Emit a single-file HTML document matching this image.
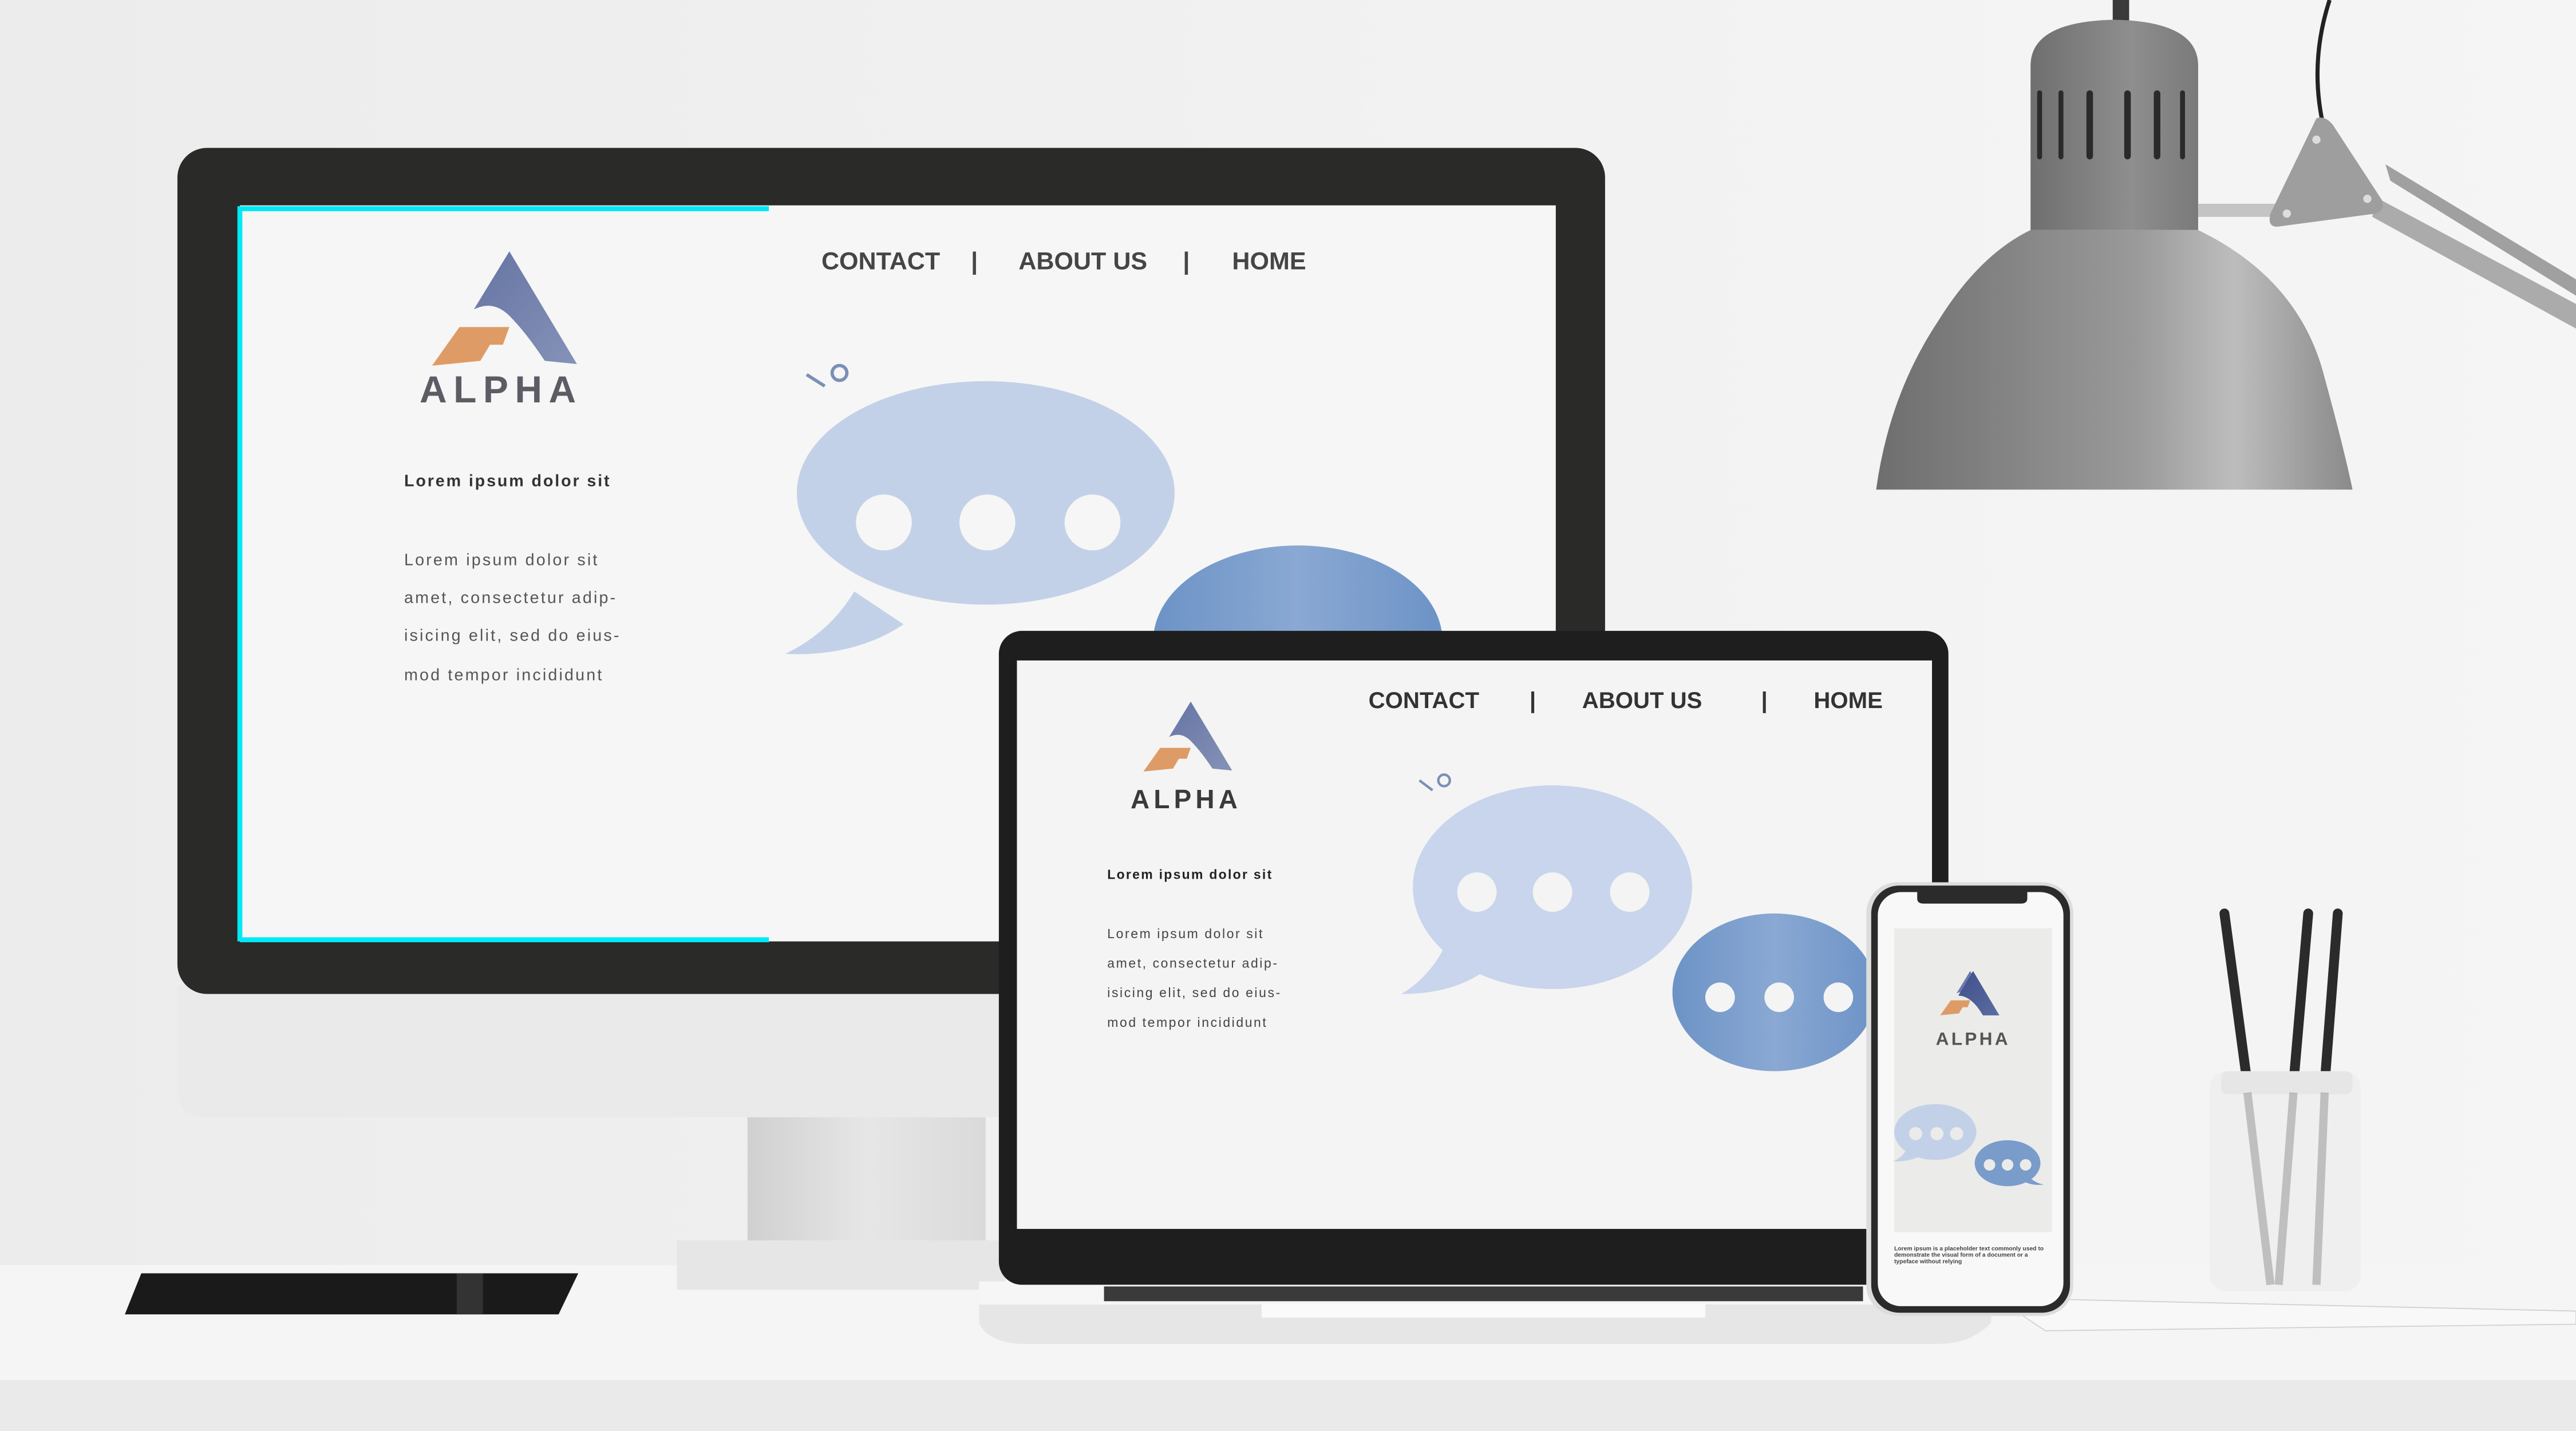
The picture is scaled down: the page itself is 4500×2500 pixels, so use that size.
<!DOCTYPE html>
<html><head><meta charset="utf-8"><style>
html,body{margin:0;padding:0;width:4500px;height:2500px;overflow:hidden;background:#efefef}
svg{display:block}
text{font-family:"Liberation Sans",sans-serif}
</style></head><body>
<svg width="4500" height="2500" viewBox="0 0 1568 871" preserveAspectRatio="none" xmlns="http://www.w3.org/2000/svg">
<defs>
<linearGradient id="bg" x1="0" y1="0" x2="1" y2="0"><stop offset="0" stop-color="#ececec"/><stop offset="0.6" stop-color="#f2f2f2"/><stop offset="1" stop-color="#f5f5f5"/></linearGradient>
<linearGradient id="shade" x1="0" y1="0" x2="1" y2="0"><stop offset="0" stop-color="#6e6e6e"/><stop offset="0.55" stop-color="#9a9a9a"/><stop offset="0.75" stop-color="#bdbdbd"/><stop offset="1" stop-color="#8a8a8a"/></linearGradient>
<linearGradient id="head" x1="0" y1="0" x2="1" y2="0"><stop offset="0" stop-color="#6f6f6f"/><stop offset="0.6" stop-color="#8e8e8e"/><stop offset="1" stop-color="#7a7a7a"/></linearGradient>
<linearGradient id="tri" x1="0" y1="0" x2="1" y2="1"><stop offset="0" stop-color="#6674a3"/><stop offset="1" stop-color="#8592b8"/></linearGradient>
<linearGradient id="tri2" x1="0" y1="0" x2="1" y2="1"><stop offset="0" stop-color="#3e4f8c"/><stop offset="1" stop-color="#5b6ca0"/></linearGradient>
<linearGradient id="b2" x1="0" y1="0" x2="1" y2="0"><stop offset="0" stop-color="#6c93c6"/><stop offset="0.5" stop-color="#8aa8d3"/><stop offset="1" stop-color="#6c93c6"/></linearGradient>
<linearGradient id="neck" x1="0" y1="0" x2="1" y2="0"><stop offset="0" stop-color="#d0d0d0"/><stop offset="0.5" stop-color="#e6e6e6"/><stop offset="1" stop-color="#dadada"/></linearGradient>
<clipPath id="imacScr"><rect x="146" y="125" width="801" height="448"/></clipPath>
<clipPath id="lapScr"><rect x="619" y="402" width="557" height="346"/></clipPath>
<g id="logo">
<path d="M48 0 L90 70 L70 68 Q58 50 48 40 Q38 30 26 36 Z" fill="url(#tri)"/>
<path d="M17 47 L48 47 L44 58 L36 58 L30 68 L0 71 Z" fill="#de9b66"/>
</g>
</defs>
<rect width="1568" height="871" fill="url(#bg)"/>
<rect y="770" width="1568" height="70" fill="#f5f5f5"/>
<rect y="840" width="1568" height="31" fill="#eaeaea"/>

<!-- lamp -->
<rect x="1286" y="0" width="10" height="18" fill="#3a3a3a"/>
<path d="M1418 0 Q1405 40 1415 80" stroke="#222" stroke-width="2.5" fill="none"/>
<path d="M1236 40 Q1236 13 1287 12 Q1338 13 1338 40 L1338 140 L1236 140 Z" fill="url(#head)"/>
<g fill="#2a2a2a"><rect x="1240" y="55" width="3" height="42" rx="1.5"/><rect x="1253" y="55" width="3" height="42" rx="1.5"/><rect x="1270" y="55" width="4" height="42" rx="2"/><rect x="1293" y="55" width="4" height="42" rx="2"/><rect x="1311" y="55" width="4" height="42" rx="2"/><rect x="1327" y="55" width="3" height="42" rx="1.5"/></g>
<path d="M1236 140 L1338 140 Q1400 170 1415 230 Q1426 270 1432 298 L1142 298 Q1150 240 1180 195 Q1205 155 1236 140 Z" fill="url(#shade)"/>
<rect x="1338" y="124" width="48" height="8" fill="#c4c4c4"/>
<path d="M1446 120 L1568 185 L1568 200 L1444 132 Z" fill="#ababab"/>
<path d="M1452 100 L1568 170 L1568 180 L1455 110 Z" fill="#a0a0a0"/>
<path d="M1410 72 Q1415 70 1420 76 L1450 122 Q1452 128 1446 130 L1386 138 Q1380 138 1382 130 Z" fill="#9e9e9e"/>
<circle cx="1410" cy="85" r="2.5" fill="#ddd"/><circle cx="1392" cy="130" r="2.5" fill="#ddd"/><circle cx="1441" cy="121" r="2.5" fill="#ddd"/>

<!-- iMac -->
<rect x="455" y="680" width="145" height="80" fill="url(#neck)"/>
<rect x="412" y="755" width="200" height="30" fill="#e6e6e6"/>
<path d="M108 600 L977 600 L977 662 Q977 680 959 680 L126 680 Q108 680 108 662 Z" fill="#eaeaea"/>
<rect x="108" y="90" width="869" height="515" rx="18" fill="#2a2a28"/>
<rect x="146" y="125" width="801" height="448" fill="#f6f6f6"/>
<g clip-path="url(#imacScr)">
<use href="#logo" transform="translate(263,153) scale(0.98)"/>
<text x="305" y="245" text-anchor="middle" font-size="23" font-weight="bold" fill="#5c5c64" letter-spacing="4">ALPHA</text>
<text x="246" y="296" font-size="10" font-weight="bold" fill="#333" letter-spacing="1">Lorem ipsum dolor sit</text>
<g font-size="10" fill="#555" letter-spacing="1.1"><text x="246" y="344">Lorem ipsum dolor sit</text><text x="246" y="367">amet, consectetur adip-</text><text x="246" y="390">isicing elit, sed do eius-</text><text x="246" y="414">mod tempor incididunt</text></g>
<g font-size="15" font-weight="bold" fill="#454545"><text x="500" y="164">CONTACT</text><text x="591" y="164">|</text><text x="620" y="164">ABOUT US</text><text x="720" y="164">|</text><text x="750" y="164">HOME</text></g>
<line x1="491" y1="228" x2="502" y2="235" stroke="#7a8fb5" stroke-width="2"/><circle cx="511" cy="227" r="4.5" fill="none" stroke="#7a8fb5" stroke-width="2"/>
<ellipse cx="790" cy="390" rx="88" ry="58" fill="url(#b2)"/>
<path d="M520 360 Q505 385 478 398 Q520 400 550 380 Z" fill="#c3d1e8"/>
<ellipse cx="600" cy="300" rx="115" ry="68" fill="#c3d1e8"/>
<circle cx="538" cy="318" r="17" fill="#f6f6f6"/><circle cx="601" cy="318" r="17" fill="#f6f6f6"/><circle cx="665" cy="318" r="17" fill="#f6f6f6"/>
</g>
<path d="M146 573 L146 127 L468 127" stroke="#00e8f5" stroke-width="3" fill="none"/>
<line x1="146" y1="572" x2="468" y2="572" stroke="#00e8f5" stroke-width="3"/>

<!-- notebook -->
<path d="M86 775 L352 775 L340 800 L76 800 Z" fill="#1a1a1a"/>
<rect x="278" y="775" width="16" height="25" fill="#333"/>

<!-- paper -->
<path d="M1215 790 L1568 798 L1568 806 L1245 810 Z" fill="#f8f8f8" stroke="#cfcfcf" stroke-width="0.6"/>

<!-- pencil cup -->
<g stroke="#2b2b2b" stroke-width="6" stroke-linecap="round"><line x1="1354" y1="556" x2="1368" y2="660"/><line x1="1405" y1="556" x2="1396" y2="660"/><line x1="1423" y1="556" x2="1415" y2="660"/></g>
<rect x="1345" y="652" width="92" height="134" rx="10" fill="#eeeeee" opacity="0.95"/>
<rect x="1352" y="652" width="80" height="14" rx="4" fill="#e6e6e6"/>
<g stroke="#999" stroke-width="5" opacity="0.55"><line x1="1368" y1="665" x2="1382" y2="782"/><line x1="1396" y1="665" x2="1387" y2="782"/><line x1="1415" y1="665" x2="1410" y2="782"/></g>

<!-- laptop -->
<path d="M596 782 L1212 782 L1212 805 Q1200 818 1180 818 L620 818 Q600 816 596 805 Z" fill="#e6e6e6"/>
<rect x="596" y="780" width="616" height="14" fill="#f6f6f6"/>
<rect x="672" y="783" width="462" height="9" fill="#3a3a3a"/>
<rect x="768" y="794" width="270" height="8" fill="#fafafa"/>
<rect x="608" y="384" width="578" height="398" rx="14" fill="#1e1e1e"/>
<rect x="619" y="402" width="557" height="346" fill="#f4f4f4"/>
<g clip-path="url(#lapScr)">
<use href="#logo" transform="translate(696,427) scale(0.6)"/>
<text x="722" y="492" text-anchor="middle" font-size="16" font-weight="bold" fill="#3a3a3a" letter-spacing="2.5">ALPHA</text>
<text x="674" y="535" font-size="8" font-weight="bold" fill="#222" letter-spacing="0.8">Lorem ipsum dolor sit</text>
<g font-size="8" fill="#444" letter-spacing="0.9"><text x="674" y="571">Lorem ipsum dolor sit</text><text x="674" y="589">amet, consectetur adip-</text><text x="674" y="607">isicing elit, sed do eius-</text><text x="674" y="625">mod tempor incididunt</text></g>
<g font-size="14" font-weight="bold" fill="#333"><text x="833" y="431">CONTACT</text><text x="931" y="431">|</text><text x="963" y="431">ABOUT US</text><text x="1072" y="431">|</text><text x="1104" y="431">HOME</text></g>
<line x1="864" y1="475" x2="872" y2="481" stroke="#7a8fb5" stroke-width="1.5"/><circle cx="879" cy="475" r="3.5" fill="none" stroke="#7a8fb5" stroke-width="1.5"/>
<ellipse cx="1080" cy="604" rx="62" ry="48" fill="url(#b2)"/>
<circle cx="1047" cy="607" r="9" fill="#f4f4f4"/><circle cx="1083" cy="607" r="9" fill="#f4f4f4"/><circle cx="1119" cy="607" r="9" fill="#f4f4f4"/>
<path d="M880 575 Q870 595 853 605 Q885 605 905 590 Z" fill="#c8d5ec"/>
<ellipse cx="945" cy="540" rx="85" ry="62" fill="#c8d5ec"/>
<circle cx="899" cy="543" r="12" fill="#f4f4f4"/><circle cx="945" cy="543" r="12" fill="#f4f4f4"/><circle cx="992" cy="543" r="12" fill="#f4f4f4"/>
</g>

<!-- phone -->
<rect x="1136" y="537" width="126" height="264" rx="19" fill="#dcdcdc"/>
<rect x="1139" y="539" width="121" height="260" rx="17" fill="#2b2b2b"/>
<rect x="1143" y="543" width="113" height="252" rx="14" fill="#f8f8f8"/>
<path d="M1167 543 L1234 543 L1234 547 Q1234 550 1230 550 L1171 550 Q1167 550 1167 547 Z" fill="#2b2b2b"/>
<rect x="1153" y="565" width="96" height="185" fill="#ebebea"/>
<use href="#logo" transform="translate(1181,591) scale(0.38)"/>
<path d="M1201 591 L1217 618 L1207 618 Q1200 606 1192 606 Z" fill="url(#tri2)"/>
<text x="1201" y="636" text-anchor="middle" font-size="11" font-weight="bold" fill="#555" letter-spacing="1.5">ALPHA</text>
<ellipse cx="1178" cy="689" rx="25" ry="17" fill="#c3d1e8"/>
<path d="M1162 697 Q1158 705 1152 707 Q1165 707 1172 702 Z" fill="#c3d1e8"/>
<circle cx="1166" cy="690" r="4" fill="#ebebea"/><circle cx="1179" cy="690" r="4" fill="#ebebea"/><circle cx="1191" cy="690" r="4" fill="#ebebea"/>
<ellipse cx="1222" cy="708" rx="20" ry="14" fill="#7a9ccb"/>
<path d="M1234 715 Q1238 720 1244 721 Q1236 722 1230 718 Z" fill="#7a9ccb"/>
<circle cx="1211" cy="709" r="3.5" fill="#ebebea"/><circle cx="1222" cy="709" r="3.5" fill="#ebebea"/><circle cx="1233" cy="709" r="3.5" fill="#ebebea"/>
<g font-size="3.6" font-weight="bold" fill="#444"><text x="1153" y="761">Lorem ipsum is a placeholder text commonly used to</text><text x="1153" y="765">demonstrate the visual form of a document or a</text><text x="1153" y="769">typeface without relying</text></g>
</svg>
</body></html>
